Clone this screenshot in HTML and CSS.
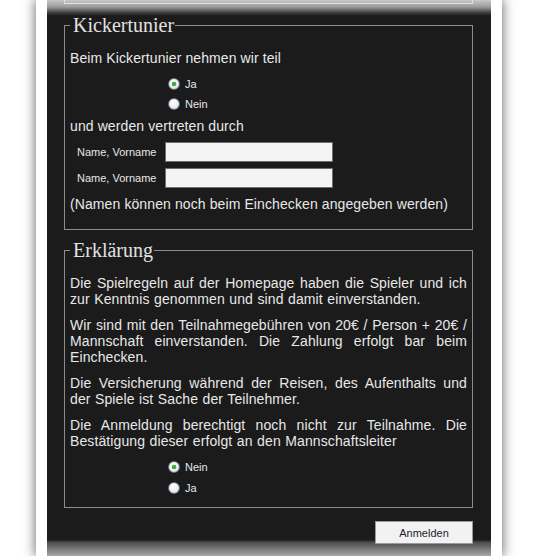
FILE: index.html
```html
<!DOCTYPE html>
<html lang="de">
<head>
<meta charset="utf-8">
<title>Anmeldung</title>
<link rel="stylesheet" href="styles.css">
</head>
<body>
<div class="wrapper">
  <div class="panel">
    <div class="prev-end"></div>

    <fieldset class="box box-kicker">
      <legend class="legend">Kickertunier</legend>
      <p class="text intro">Beim Kickertunier nehmen wir teil</p>
      <div class="radios">
        <label class="radio-row"><input class="radio" type="radio" name="kicker" checked><span>Ja</span></label>
        <label class="radio-row"><input class="radio" type="radio" name="kicker"><span>Nein</span></label>
      </div>
      <p class="text mid">und werden vertreten durch</p>
      <div class="names">
        <label class="name-label">Name, Vorname</label><input class="field" type="text">
        <label class="name-label">Name, Vorname</label><input class="field" type="text">
      </div>
      <p class="text note">(Namen können noch beim Einchecken angegeben werden)</p>
    </fieldset>

    <fieldset class="box box-decl">
      <legend class="legend">Erklärung</legend>
      <p class="text para first">Die Spielregeln auf der Homepage haben die Spieler und ich zur Kenntnis genommen und sind damit einverstanden.</p>
      <p class="text para">Wir sind mit den Teilnahmegebühren von 20€ / Person + 20€ / Mannschaft einverstanden. Die Zahlung erfolgt bar beim Einchecken.</p>
      <p class="text para">Die Versicherung während der Reisen, des Aufenthalts und der Spiele ist Sache der Teilnehmer.</p>
      <p class="text para">Die Anmeldung berechtigt noch nicht zur Teilnahme. Die Bestätigung dieser erfolgt an den Mannschaftsleiter</p>
      <div class="radios radios-decl">
        <label class="radio-row"><input class="radio" type="radio" name="decl" checked><span>Nein</span></label>
        <label class="radio-row"><input class="radio" type="radio" name="decl"><span>Ja</span></label>
      </div>
    </fieldset>

    <div class="actions">
      <button class="submit" type="button">Anmelden</button>
    </div>
  </div>
</div>
</body>
</html>
```

FILE: styles.css
```css
html, body {
  margin: 0;
  padding: 0;
  background: #ffffff;
  overflow: hidden;
}

body {
  font-family: "Liberation Sans", Arial, sans-serif;
  height: 556px;
}

.wrapper {
  width: 444px;
  margin-left: 36px;
  padding: 0 11px;
  background: #ffffff;
  box-shadow: 0 0 11px 1px rgba(0, 0, 0, 0.55);
  height: 556px;
}

.panel {
  height: 556px;
  box-sizing: border-box;
  padding: 0 18px 0 17px;
  background: linear-gradient(to bottom,
    #c9c9c9 0px,
    #9a9a9a 7px,
    #3a3a3a 13px,
    #1b1b1b 16px,
    #1b1b1b 540px,
    #4a4a4a 542px,
    #a8a8a8 556px);
}

.prev-end {
  height: 3px;
  border: 1px solid #e2e2e2;
  border-top: none;
}

.box {
  margin: 0;
  padding: 0 5px 0 5px;
  border: 1px solid #8c8c8c;
  min-width: 0;
}

.box-kicker {
  margin-top: 10px;
  padding-bottom: 17px;
}

.box-decl {
  margin-top: 9px;
  padding-bottom: 9px;
}

.legend {
  padding: 0 1px 0 3px;
  font-family: "Liberation Serif", "Times New Roman", serif;
  font-size: 20px;
  line-height: 23px;
  color: #e2e2e2;
}

.text {
  margin: 0;
  font-size: 14px;
  line-height: 16px;
  letter-spacing: 0.1px;
  color: #e8e8e8;
}

.intro { margin-top: 13px; margin-bottom: 8px; }
.mid { margin-top: 4px; }
.note { margin-top: 8px; }

.para {
  margin-top: 10px;
  text-align: justify;
  word-spacing: 0.5px;
}
.para.first { margin-top: 13px; }

.radios {
  display: flex;
  flex-direction: column;
  padding-left: 98px;
}

.radios-decl { margin-top: 7px; }

.radio-row {
  display: flex;
  align-items: center;
  gap: 5px;
  height: 20px;
  font-size: 11px;
  color: #e8e8e8;
}

.radios-decl .radio-row { height: 21px; }

.radio {
  appearance: none;
  -webkit-appearance: none;
  margin: 0;
  width: 12px;
  height: 12px;
  border-radius: 50%;
  border: 1px solid #5d6f80;
  background: radial-gradient(circle at 40% 35%, #ffffff 0, #f2f2f2 45%, #cfcfcf 100%);
  box-sizing: border-box;
  position: relative;
}

.radio:checked::after {
  content: "";
  position: absolute;
  left: 3px;
  top: 3px;
  width: 4px;
  height: 4px;
  border-radius: 50%;
  background: #2fb52f;
  box-shadow: 0 0 1px #1a7d1a;
}

.names {
  display: grid;
  grid-template-columns: 95px 168px;
  row-gap: 6px;
  align-items: center;
  margin-top: 8px;
}

.name-label {
  padding-left: 7px;
  font-size: 11px;
  color: #e8e8e8;
}

.field {
  margin: 0;
  width: 168px;
  height: 20px;
  box-sizing: border-box;
  border: 1px solid #6e6e6e;
  background: #f4f4f4;
  padding: 0 3px;
}

.actions {
  display: flex;
  justify-content: flex-end;
  margin-top: 13px;
}

.submit {
  width: 98px;
  height: 23px;
  margin: 0;
  border: 1px solid #9a9a9a;
  background: #f2f2f2;
  font-family: "Liberation Sans", Arial, sans-serif;
  font-size: 11px;
  color: #1c1c2c;
}
```
